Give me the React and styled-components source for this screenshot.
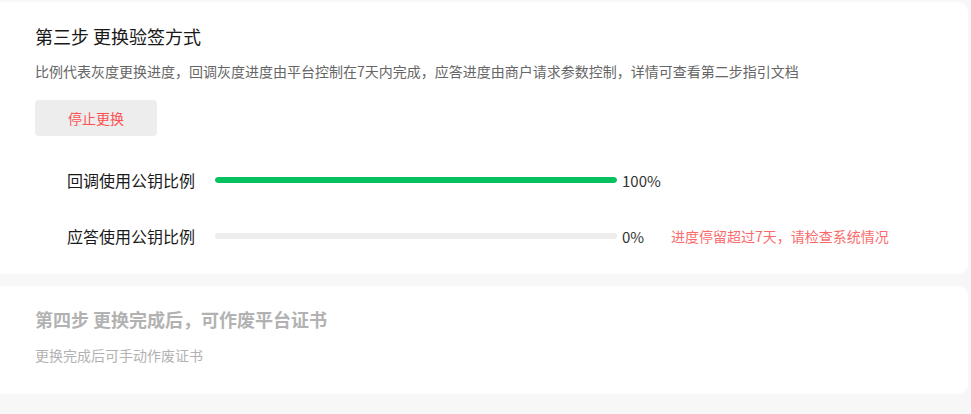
import React from "react";
import styled, { createGlobalStyle } from "styled-components";

const Global = createGlobalStyle`
  html, body { margin: 0; padding: 0; background: #f7f7f7; }
  body { font-family: "Noto Sans CJK SC", "Noto Sans", sans-serif; }
`;

const Page = styled.div`
  width: 971px;
  height: 414px;
  overflow: hidden;
  background: #f7f7f7;
  padding-top: 2px;
  box-sizing: border-box;
`;

const Stack = styled.div`
  display: flex;
  flex-direction: column;
  gap: 12px;
  margin-left: -12px;
  width: 980px;
`;

const Card = styled.section`
  background: #fff;
  border-radius: 10px;
  padding: ${(p) => p.$pad};
  box-sizing: border-box;
  height: ${(p) => p.$h}px;
`;

const Title = styled.h2`
  margin: 0;
  font-size: 18px;
  line-height: 26px;
  font-weight: ${(p) => (p.$muted ? 700 : 400)};
  color: ${(p) => (p.$muted ? "#b2b2b2" : "#191919")};
`;

const Desc = styled.p`
  margin: ${(p) => p.$m};
  font-size: 14px;
  line-height: 20px;
  color: ${(p) => (p.$muted ? "#b2b2b2" : "#666")};
`;

const StopButton = styled.button`
  display: block;
  margin-top: 19px;
  width: 122px;
  height: 36px;
  border: none;
  border-radius: 4px;
  background: #ededed;
  color: #fa5151;
  font-family: inherit;
  font-size: 14px;
  padding: 0;
  cursor: pointer;
`;

const Rows = styled.div`
  display: flex;
  flex-direction: column;
  gap: 32px;
  margin-top: 32px;
  padding-left: 32px;
`;

const Row = styled.div`
  display: flex;
  align-items: center;
  height: 24px;
`;

const Label = styled.span`
  width: 148px;
  flex: none;
  font-size: 16px;
  color: #191919;
`;

const Track = styled.div`
  width: 402px;
  height: 6px;
  border-radius: 3px;
  background: #ededed;
  overflow: hidden;
  flex: none;
`;

const Fill = styled.div`
  height: 100%;
  border-radius: 3px;
  background: #07c160;
`;

const Percent = styled.span`
  width: 49px;
  flex: none;
  margin-left: 5px;
  font-size: 15px;
  color: #333;
`;

const Warning = styled.span`
  font-size: 14px;
  color: #fa5151;
  opacity: 0.85;
`;

function ProgressRow({ label, value, warning }) {
  return (
    <Row>
      <Label>{label}</Label>
      <Track>
        <Fill style={{ width: `${value}%` }} />
      </Track>
      <Percent>{value}%</Percent>
      {warning && <Warning>{warning}</Warning>}
    </Row>
  );
}

export default function App() {
  return (
    <Page>
      <Global />
      <Stack>
        <Card $pad="21px 0 0 47px" $h={272}>
          <Title>第三步 更换验签方式</Title>
          <Desc $m="12px 0 0">
            比例代表灰度更换进度，回调灰度进度由平台控制在7天内完成，应答进度由商户请求参数控制，详情可查看第二步指引文档
          </Desc>
          <StopButton>停止更换</StopButton>
          <Rows>
            <ProgressRow label="回调使用公钥比例" value={100} />
            <ProgressRow
              label="应答使用公钥比例"
              value={0}
              warning="进度停留超过7天，请检查系统情况"
            />
          </Rows>
        </Card>
        <Card $pad="20px 0 0 47px" $h={108}>
          <Title $muted>第四步 更换完成后，可作废平台证书</Title>
          <Desc $m="13px 0 0" $muted>
            更换完成后可手动作废证书
          </Desc>
        </Card>
      </Stack>
    </Page>
  );
}
